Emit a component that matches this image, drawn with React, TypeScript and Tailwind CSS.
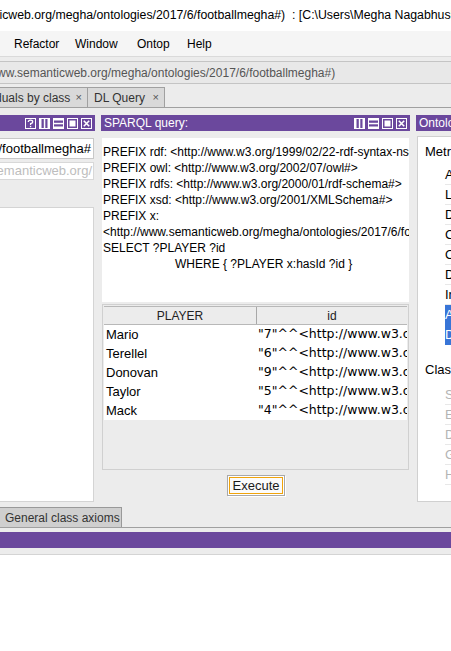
type IconKind = 'help' | 'vsplit' | 'hsplit' | 'max' | 'close'

function HeaderIcon({ kind }: { kind: IconKind }) {
  return (
    <svg width="11" height="11" viewBox="0 0 11 11" className="block">
      <rect x="0.5" y="0.5" width="10" height="10" fill="none" stroke="white" />
      {kind === 'help' && (
        <>
          <path d="M3.3 4 Q3.3 2.2 5.5 2.2 Q7.7 2.2 7.7 3.9 Q7.7 5.1 5.6 5.6 V7" fill="none" stroke="white" strokeWidth="1.3" />
          <rect x="4.9" y="7.9" width="1.3" height="1.3" fill="white" />
        </>
      )}
      {kind === 'vsplit' && (
        <>
          <rect x="1" y="1" width="1.5" height="9" fill="white" />
          <rect x="4.8" y="1" width="1.5" height="9" fill="white" />
          <rect x="8.5" y="1" width="1.5" height="9" fill="white" />
        </>
      )}
      {kind === 'hsplit' && (
        <>
          <rect x="1" y="1" width="9" height="1.5" fill="white" />
          <rect x="1" y="4.8" width="9" height="1.5" fill="white" />
          <rect x="1" y="8.5" width="9" height="1.5" fill="white" />
        </>
      )}
      {kind === 'max' && <rect x="2.5" y="2.5" width="6" height="6" fill="white" />}
      {kind === 'close' && (
        <path d="M2.8 2.8 L8.2 8.2 M8.2 2.8 L2.8 8.2" stroke="white" strokeWidth="1.6" />
      )}
    </svg>
  )
}

function PanelHeader({ title, icons }: { title: string; icons: IconKind[] }) {
  return (
    <div className="flex h-[16px] items-center justify-between overflow-hidden bg-[#6b489d] pl-[3px] pr-[3px] text-[12px] text-white">
      <span className="whitespace-nowrap">{title}</span>
      <div className="flex gap-[3px]">
        {icons.map((k) => (
          <HeaderIcon key={k} kind={k} />
        ))}
      </div>
    </div>
  )
}

const queryLines = [
  'PREFIX rdf: <http://www.w3.org/1999/02/22-rdf-syntax-ns#>',
  'PREFIX owl: <http://www.w3.org/2002/07/owl#>',
  'PREFIX rdfs: <http://www.w3.org/2000/01/rdf-schema#>',
  'PREFIX xsd: <http://www.w3.org/2001/XMLSchema#>',
  'PREFIX x:',
  '<http://www.semanticweb.org/megha/ontologies/2017/6/footballmegha#>',
  'SELECT ?PLAYER ?id',
]

const results = [
  ['Mario', '7'],
  ['Terellel', '6'],
  ['Donovan', '9'],
  ['Taylor', '5'],
  ['Mack', '4'],
]

const metrics = [
  'Axiom',
  'Logical axiom count',
  'Declaration axioms count',
  'Class count',
  'Object property count',
  'Data property count',
  'Individual count',
  'Annotation Property count',
  'DL expressivity',
]

const classAxioms = ['SubClassOf', 'EquivalentClasses', 'DisjointClasses', 'GCI count', 'Hidden GCI Count']

export default function App() {
  return (
    <div className="flex h-[651px] w-[451px] flex-col overflow-hidden bg-white font-['Liberation_Sans',Arial,sans-serif] text-[12px] text-black">
      {/* title bar */}
      <div className="flex h-[31px] shrink-0 items-center overflow-hidden bg-white">
        <span className="-ml-[4px] whitespace-pre text-[12.3px]">
          ticweb.org/megha/ontologies/2017/6/footballmegha#)  : [C:\Users\Megha Nagabhushan\Desktop\football.owl]
        </span>
      </div>

      {/* menu bar */}
      <div className="flex h-[26px] shrink-0 items-center border-b border-[#dadada] bg-[#f5f5f5] pl-[14px]">
        <span className="w-[61px]">Refactor</span>
        <span className="w-[62px]">Window</span>
        <span className="w-[50px]">Ontop</span>
        <span>Help</span>
      </div>

      <div className="flex shrink-0 flex-col bg-[#ececec]">
        {/* address bar */}
        <div className="mt-[4px] flex h-[23px] items-center overflow-hidden border-y border-[#c4c4c4] bg-[#e8e8e8] text-[#555]">
          <span className="-ml-[3px] whitespace-nowrap">ww.semanticweb.org/megha/ontologies/2017/6/footballmegha#)</span>
        </div>

        {/* tabs */}
        <div className="mt-[4px] flex h-[20px] items-end border-b border-[#a0a0a0]">
          <div className="flex h-[20px] w-[88px] items-center overflow-hidden border border-b-0 border-l-0 border-[#a0a0a0] bg-[#d9d9d9] text-[12px] text-[#333]">
            <span className="-ml-[5px] whitespace-nowrap">duals by class</span>
            <span className="ml-auto mr-[5px] text-[11px] text-[#555]">×</span>
          </div>
          <div className="flex h-[20px] w-[77px] items-center border border-b-0 border-l-0 border-[#a0a0a0] bg-[#d9d9d9] pl-[6px] text-[12px] text-[#333]">
            <span className="whitespace-nowrap">DL Query</span>
            <span className="ml-auto mr-[5px] text-[11px] text-[#555]">×</span>
          </div>
        </div>

        {/* panels */}
        <div className="mt-[7px] flex h-[390px] gap-[6px]">
          {/* left panel */}
          <div className="flex w-[95px] shrink-0 flex-col">
            <PanelHeader title="" icons={['help', 'vsplit', 'hsplit', 'max', 'close']} />
            <div className="mt-[7px] flex h-[21px] w-[94px] items-center justify-end overflow-hidden border border-l-0 border-[#c8c8c8] bg-white pr-[2px] text-[13px]">
              <span className="whitespace-nowrap">2017/6/footballmegha#</span>
            </div>
            <div className="mt-[3px] flex h-[18px] w-[94px] items-center justify-end overflow-hidden border border-l-0 border-[#d8d8d8] bg-white pr-[1px] text-[13px] text-[#bdbdbd]">
              <span className="whitespace-nowrap">http://www.semanticweb.org/</span>
            </div>
            <div className="mt-[27px] h-[295px] w-[94px] border border-l-0 border-[#d4d4d4] bg-white" />
          </div>

          {/* SPARQL panel */}
          <div className="flex w-[309px] shrink-0 flex-col">
            <PanelHeader title="SPARQL query:" icons={['vsplit', 'hsplit', 'max', 'close']} />
            <div className="mx-[1px] mt-[7px] h-[164px] overflow-hidden bg-white pl-[1px] pt-[6px] leading-[16px]">
              {queryLines.map((l) => (
                <div key={l} className="whitespace-pre">
                  {l}
                </div>
              ))}
              <div className="whitespace-pre pl-[72px]">{'WHERE { ?PLAYER x:hasId ?id }'}</div>
            </div>
            <div className="mx-[1px] mt-[2px] h-[166px] border border-[#d0d0d0] p-[1px]">
              <div className="flex h-[19px] border-y border-[#b8b8b8] bg-[#ececec] text-[12px] text-[#222]">
                <div className="flex w-[153px] shrink-0 items-center justify-center border-r border-[#a8a8a8]">PLAYER</div>
                <div className="flex flex-1 items-center justify-center">id</div>
              </div>
              <div className="bg-white text-[13px]">
                {results.map(([name, id]) => (
                  <div key={name} className="flex h-[19px] items-center overflow-hidden">
                    <div className="w-[154px] shrink-0 pl-[2px]">{name}</div>
                    <div className="min-w-0 flex-1 overflow-hidden whitespace-nowrap font-['DejaVu_Sans',sans-serif] text-[12.5px]">
                      {`"${id}"^^<http://www.w3.org/2001/XMLSchema#integer>`}
                    </div>
                  </div>
                ))}
              </div>
            </div>
            <div className="mt-[5px] flex justify-center pl-[1px]">
              <div className="border border-[#a8a8a8] bg-white p-[1px] shadow-[1px_1px_0_#fff]">
                <div className="flex h-[17px] items-center border border-[#f0a30a] bg-[#fbfbfb] px-[3px] text-[13px] text-[#1a1a1a]">
                  Execute
                </div>
              </div>
            </div>
          </div>

          {/* right panel */}
          <div className="flex min-w-0 flex-1 flex-col overflow-hidden">
            <PanelHeader title="Ontology metrics:" icons={[]} />
            <div className="mt-[5px] ml-[1px] h-[366px] overflow-hidden border border-r-0 border-[#d0d0d0] bg-white pt-[7px] text-[13px]">
              <div className="h-[16px] whitespace-nowrap pl-[7px] leading-[16px]">Metrics</div>
              <div className="mt-[5px]">
                {metrics.map((m, i) => (
                  <div
                    key={m}
                    className={
                      i >= 7
                        ? 'ml-[27px] flex h-[20px] items-center whitespace-nowrap bg-[#3875d7] text-white'
                        : 'ml-[27px] flex h-[20px] items-center whitespace-nowrap border-b border-[#e8e8e8]'
                    }
                  >
                    {m}
                  </div>
                ))}
              </div>
              <div className="mt-[17px] h-[16px] whitespace-nowrap pl-[7px] leading-[16px]">Class axioms</div>
              <div className="mt-[7px]">
                {classAxioms.map((m) => (
                  <div
                    key={m}
                    className="ml-[27px] flex h-[20px] items-center whitespace-nowrap border-b border-[#e8e8e8] text-[#b4b4b4]"
                  >
                    {m}
                  </div>
                ))}
              </div>
            </div>
          </div>
        </div>

        {/* bottom tabs */}
        <div className="mt-[3px] flex h-[20px] items-end border-b border-[#a0a0a0]">
          <div className="flex h-[20px] w-[122px] items-center whitespace-nowrap border border-b-0 border-l-0 border-[#999] bg-[#cfcfcf] pl-[5px] text-[12px] text-[#333]">
            General class axioms
          </div>
        </div>
        <div className="mt-[4px] h-[16px] bg-[#6b489d]" />
        <div className="h-[7px] border-b border-[#d4d4d4]" />
      </div>

      <div className="flex-1 bg-white" />
    </div>
  )
}
